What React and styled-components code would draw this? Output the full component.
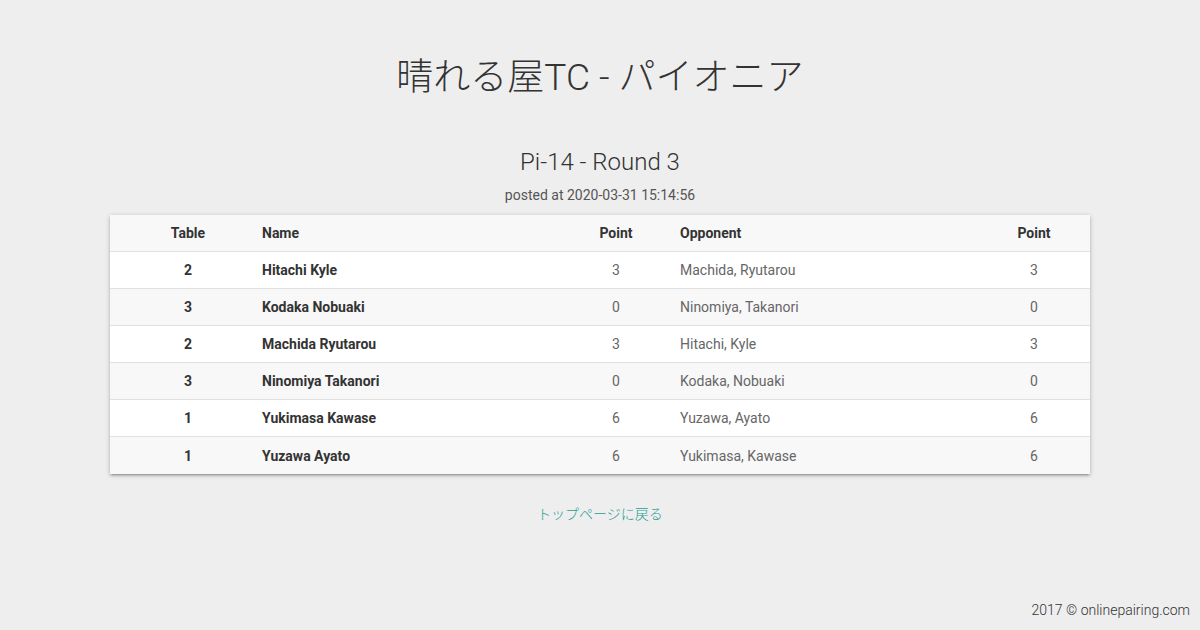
import React from 'react'
import styled, { createGlobalStyle } from 'styled-components'

const GlobalStyle = createGlobalStyle`
  html, body {
    margin: 0;
    padding: 0;
    background: #eeeeee;
  }
  body {
    font-family: Roboto, "Noto Sans CJK JP", sans-serif;
    color: #333;
  }
`

const Page = styled.div`
  min-height: 630px;
  display: flex;
  flex-direction: column;
  align-items: center;
  box-sizing: border-box;
  padding-top: 58px;
`

const Title = styled.h1`
  margin: 0;
  font-size: 37px;
  font-weight: 300;
  line-height: 40px;
  color: #333;
`

const Round = styled.h2`
  margin: 49px 0 0;
  font-size: 24px;
  font-weight: 300;
  line-height: 30px;
  color: #333;
`

const Posted = styled.div`
  margin-top: 8px;
  font-size: 14px;
  line-height: 20px;
  font-weight: 400;
  color: #555;
`

const Card = styled.div`
  margin-top: 10px;
  width: 980px;
  background: #fff;
  box-shadow: 0 2px 2px 0 rgba(0, 0, 0, 0.14), 0 3px 1px -2px rgba(0, 0, 0, 0.12), 0 1px 5px 0 rgba(0, 0, 0, 0.2);
`

const Row = styled.div`
  display: grid;
  grid-template-columns: 152px 310px 88px 330px 88px;
  padding-right: 12px;
  height: 37px;
  box-sizing: border-box;
  align-items: center;
  font-size: 14px;
  background: ${props => (props.shaded ? '#f8f8f8' : '#fff')};
  border-bottom: ${props => (props.last ? 'none' : '1px solid #e0e0e0')};
`

const Cell = styled.div`
  text-align: ${props => (props.center ? 'center' : 'left')};
  padding-left: ${props => props.pad || 0}px;
  font-weight: ${props => (props.bold ? 700 : 400)};
  color: ${props => (props.bold ? '#333' : '#666')};
  white-space: nowrap;
`

const BackLink = styled.a`
  margin-top: 30px;
  font-size: 14px;
  line-height: 20px;
  color: #1f9d92;
  text-decoration: none;
  font-weight: 300;
`

const Footer = styled.div`
  margin-top: auto;
  align-self: stretch;
  text-align: right;
  padding: 0 10px 10px 0;
  font-size: 14px;
  line-height: 20px;
  font-weight: 300;
  color: #333;
`

const rows = [
  { table: 2, name: 'Hitachi Kyle', point: 3, opp: 'Machida, Ryutarou', oppPoint: 3 },
  { table: 3, name: 'Kodaka Nobuaki', point: 0, opp: 'Ninomiya, Takanori', oppPoint: 0 },
  { table: 2, name: 'Machida Ryutarou', point: 3, opp: 'Hitachi, Kyle', oppPoint: 3 },
  { table: 3, name: 'Ninomiya Takanori', point: 0, opp: 'Kodaka, Nobuaki', oppPoint: 0 },
  { table: 1, name: 'Yukimasa Kawase', point: 6, opp: 'Yuzawa, Ayato', oppPoint: 6 },
  { table: 1, name: 'Yuzawa Ayato', point: 6, opp: 'Yukimasa, Kawase', oppPoint: 6 },
]

export default function App() {
  return (
    <>
      <GlobalStyle />
      <Page>
        <Title>晴れる屋TC - パイオニア</Title>
        <Round>Pi-14 - Round 3</Round>
        <Posted>posted at 2020-03-31 15:14:56</Posted>
        <Card>
          <Row shaded>
            <Cell center bold pad={4}>Table</Cell>
            <Cell bold>Name</Cell>
            <Cell center bold>Point</Cell>
            <Cell bold pad={20}>Opponent</Cell>
            <Cell center bold>Point</Cell>
          </Row>
          {rows.map((r, i) => (
            <Row key={i} shaded={i % 2 === 1} last={i === rows.length - 1}>
              <Cell center bold pad={4}>{r.table}</Cell>
              <Cell bold>{r.name}</Cell>
              <Cell center>{r.point}</Cell>
              <Cell pad={20}>{r.opp}</Cell>
              <Cell center>{r.oppPoint}</Cell>
            </Row>
          ))}
        </Card>
        <BackLink href="#">トップページに戻る</BackLink>
        <Footer>2017 © onlinepairing.com</Footer>
      </Page>
    </>
  )
}
